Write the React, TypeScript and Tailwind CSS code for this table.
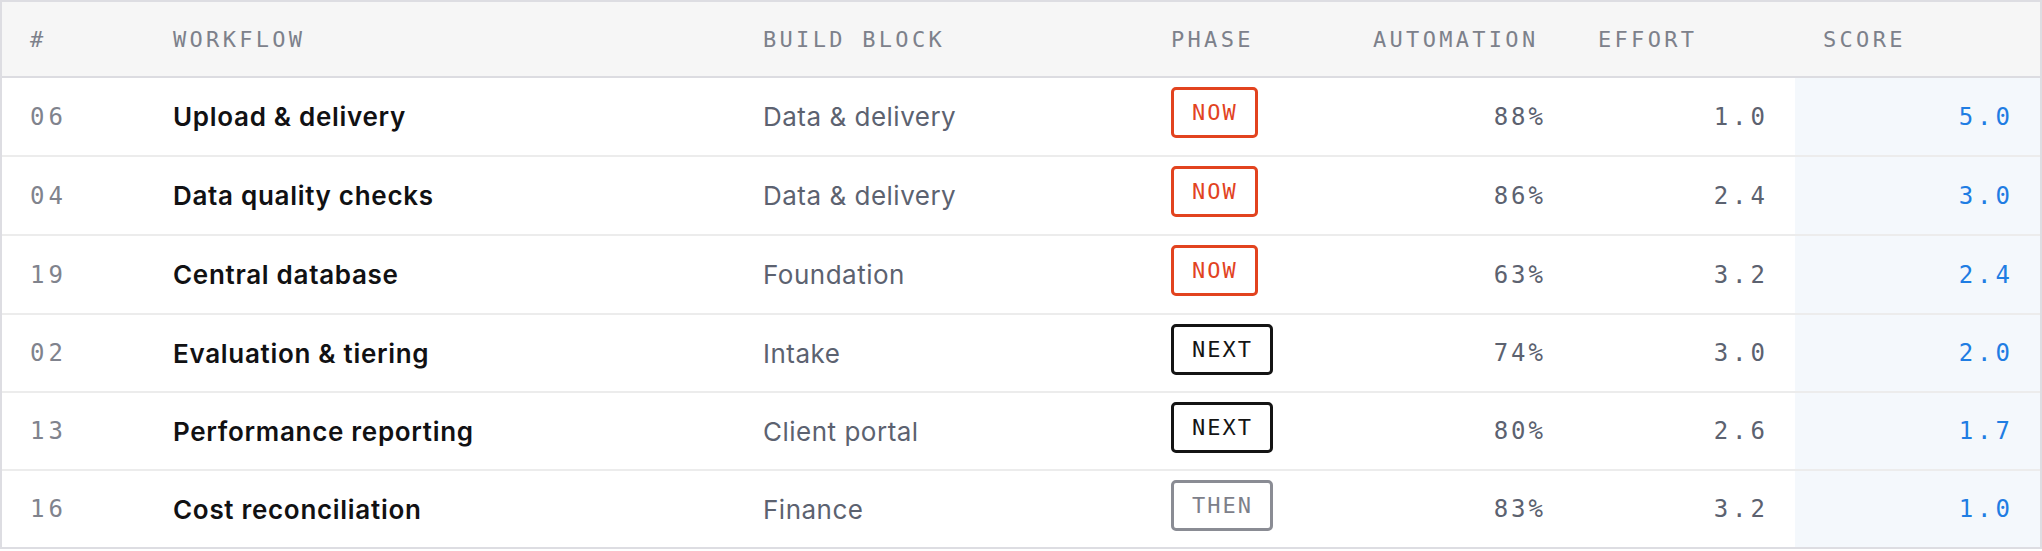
const rows = [
  { id: "06", name: "Upload & delivery", block: "Data & delivery", phase: "NOW", auto: "88%", effort: "1.0", score: "5.0", h: "h-[79px]" },
  { id: "04", name: "Data quality checks", block: "Data & delivery", phase: "NOW", auto: "86%", effort: "2.4", score: "3.0", h: "h-[79px]" },
  { id: "19", name: "Central database", block: "Foundation", phase: "NOW", auto: "63%", effort: "3.2", score: "2.4", h: "h-[79px]" },
  { id: "02", name: "Evaluation & tiering", block: "Intake", phase: "NEXT", auto: "74%", effort: "3.0", score: "2.0", h: "h-[78px]" },
  { id: "13", name: "Performance reporting", block: "Client portal", phase: "NEXT", auto: "80%", effort: "2.6", score: "1.7", h: "h-[78px]" },
  { id: "16", name: "Cost reconciliation", block: "Finance", phase: "THEN", auto: "83%", effort: "3.2", score: "1.0", h: "h-[76px]" },
];

const grid = "grid grid-cols-[143px_590px_408px_202px_225px_225px_1fr]";
const mono = "font-['DejaVu_Sans_Mono',monospace]";
const sans = "font-['Inter','Noto_Sans',sans-serif]";

function PhaseBadge({ phase }: { phase: string }) {
  const tone =
    phase === "NOW"
      ? "border-[#e2431f] text-[#e2431f]"
      : phase === "NEXT"
        ? "border-[#141414] text-[#141414]"
        : "border-[#8a8c94] text-[#7d808a]";
  return (
    <span
      className={
        "inline-flex h-[51px] items-center rounded-[5px] border-[3px] pl-[18px] pr-[17px] text-[22px] tracking-[2px] " +
        mono +
        " " +
        tone
      }
    >
      {phase}
    </span>
  );
}

export default function App() {
  return (
    <div className="w-full bg-white">
      <div className="border-2 border-[#dddde2] bg-white">
        {/* Header */}
        <div
          className={
            grid +
            " h-[76px] items-center border-b-2 border-[#dcdce1] bg-[#f6f6f6] text-[22px] tracking-[3.3px] text-[#7d818b] " +
            mono
          }
        >
          <div className="px-7">#</div>
          <div className="px-7">WORKFLOW</div>
          <div className="px-7">BUILD BLOCK</div>
          <div className="px-7">PHASE</div>
          <div className="px-7">AUTOMATION</div>
          <div className="px-7">EFFORT</div>
          <div className="px-7">SCORE</div>
        </div>

        {/* Rows */}
        {rows.map((r, i) => (
          <div
            key={r.id}
            className={grid + " " + r.h + (i < rows.length - 1 ? " border-b-2 border-[#ececec]" : "")}
          >
            <div className={"flex items-center px-7 text-[24px] tracking-[4px] text-[#80838d] " + mono}>
              {r.id}
            </div>
            <div
              className={
                "flex items-center px-7 text-[26px] font-semibold tracking-[0.7px] text-[#111113] " + sans
              }
            >
              {r.name}
            </div>
            <div className={"flex items-center px-7 text-[26px] tracking-[0.5px] text-[#5c6270] " + sans}>
              {r.block}
            </div>
            <div className="flex items-center px-7 pb-[8px]">
              <PhaseBadge phase={r.phase} />
            </div>
            <div
              className={
                "flex items-center justify-end pl-7 pr-[24px] text-[24px] tracking-[3px] text-[#5c6270] " + mono
              }
            >
              {r.auto}
            </div>
            <div
              className={
                "flex items-center justify-end pl-7 pr-[26px] text-[24px] tracking-[4px] text-[#5c6270] " + mono
              }
            >
              {r.effort}
            </div>
            <div
              className={
                "flex items-center justify-end bg-[#f4f8fc] pl-7 pr-[26px] text-[24px] tracking-[4px] text-[#1f7de3] " +
                mono
              }
            >
              {r.score}
            </div>
          </div>
        ))}
      </div>
    </div>
  );
}
